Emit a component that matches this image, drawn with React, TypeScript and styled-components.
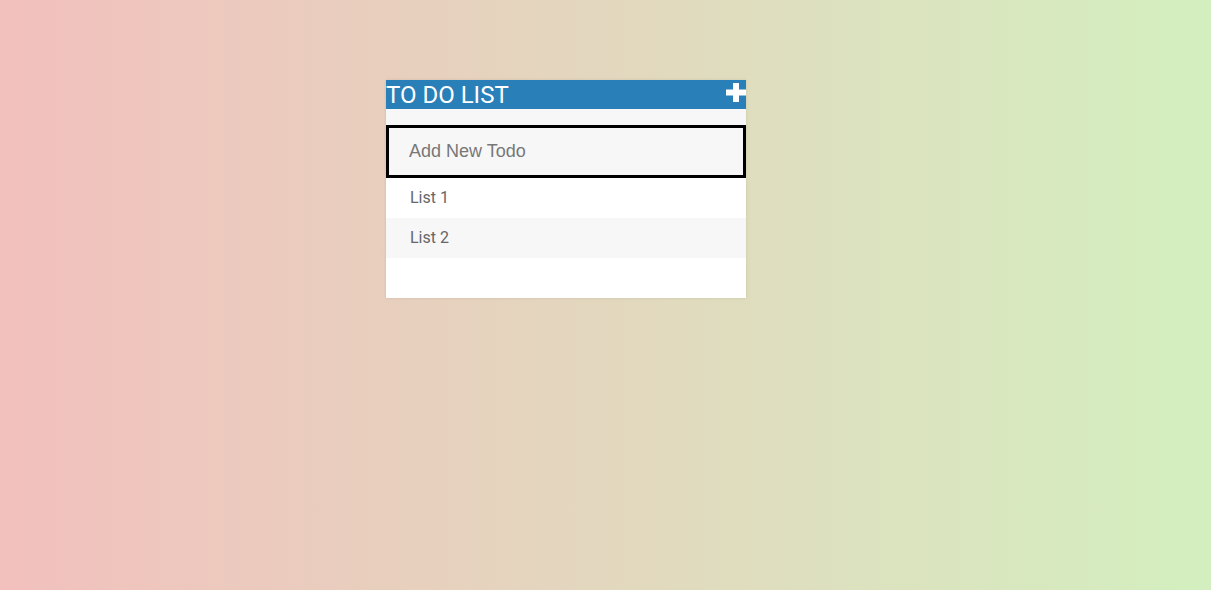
import React from "react";
import styled, { createGlobalStyle } from "styled-components";

const Global = createGlobalStyle`
  html, body { margin: 0; padding: 0; height: 100%; }
  body {
    font-family: Roboto, "Liberation Sans", Arial, sans-serif;
    background: linear-gradient(90deg, #f2c0bd 0%, #d3efbf 100%);
    min-height: 590px;
  }
`;

const Page = styled.div`
  display: flex;
  justify-content: center;
  padding-top: 80px;
  padding-right: 79px;
`;

const Card = styled.div`
  width: 360px;
  background: #f7f7f7;
  box-shadow: 0 0 3px rgba(0, 0, 0, 0.1);
`;

const Header = styled.h1`
  margin: 0;
  height: 29px;
  background: #2980b9;
  color: #fff;
  font-family: Roboto, "Liberation Sans", sans-serif;
  font-weight: 400;
  font-size: 24px;
  line-height: 30px;
  text-transform: uppercase;
  display: flex;
  justify-content: space-between;
  align-items: flex-start;
`;

const PlusIcon = styled.svg`
  width: 20px;
  height: 19px;
  margin-top: 3px;
  display: block;
`;

const Input = styled.input`
  display: block;
  box-sizing: border-box;
  width: 100%;
  height: 53px;
  margin-top: 16px;
  padding: 0 20px;
  font-family: "Liberation Sans", Arial, sans-serif;
  font-size: 18px;
  color: #666;
  background: #f7f7f7;
  border: 3px solid #000;
  outline: none;
  &::placeholder { color: #777; }
`;

const List = styled.ul`
  list-style: none;
  margin: 0;
  padding: 0 0 40px;
  background: #fff;
`;

const Item = styled.li<{ $alt?: boolean }>`
  height: 40px;
  line-height: 40px;
  padding-left: 24px;
  font-size: 16px;
  color: #666;
  background: ${(p) => (p.$alt ? "#f7f7f7" : "#fff")};
`;

export default function App() {
  const items = ["List 1", "List 2"];
  return (
    <>
      <Global />
      <Page>
        <Card>
          <Header>
            <span>To Do List</span>
            <PlusIcon viewBox="0 0 20 19">
              <path d="M7 0h6v6.5H20v6h-7V19H7v-6.5H0v-6h7z" fill="#fff" />
            </PlusIcon>
          </Header>
          <Input placeholder="Add New Todo" />
          <List>
            {items.map((t, i) => (
              <Item key={t} $alt={i % 2 === 1}>
                {t}
              </Item>
            ))}
          </List>
        </Card>
      </Page>
    </>
  );
}
